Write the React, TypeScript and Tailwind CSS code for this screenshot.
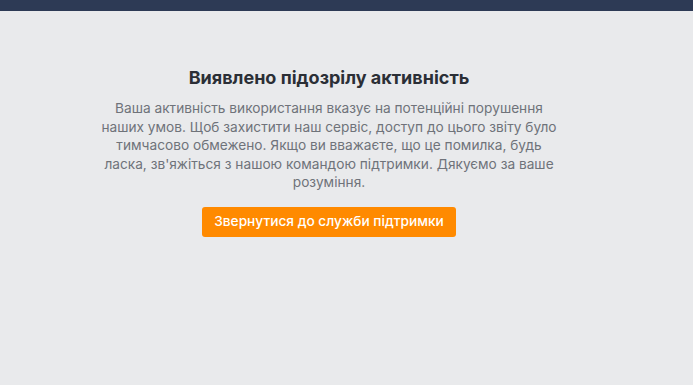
export default function App() {
  return (
    <div className="min-h-[385px] bg-[#e9eaec] font-['Inter',sans-serif]">
      <div className="h-[11px] bg-[#2d3a55]" />
      <div className="flex justify-center pr-[35px] pt-[55px]">
        <div className="flex w-[462px] flex-col items-center text-center">
          <h1 className="text-[18px] font-bold leading-[24px] text-[#2b2f36]">
            Виявлено підозрілу активність
          </h1>
          <p className="mt-[9px] text-[13.7px] leading-[18.5px] text-[#6f737a]">
            Ваша активність використання вказує на потенційні порушення наших умов. Щоб захистити наш сервіс,
            доступ до цього звіту було тимчасово обмежено. Якщо ви вважаєте, що це помилка, будь ласка,
            зв'яжіться з нашою командою підтримки. Дякуємо за ваше розуміння.
          </p>
          <button className="mt-[15px] h-[30px] rounded-[3px] bg-[#ff8a00] px-[12.5px] text-[13.7px] font-medium text-white">
            Звернутися до служби підтримки
          </button>
        </div>
      </div>
    </div>
  );
}
